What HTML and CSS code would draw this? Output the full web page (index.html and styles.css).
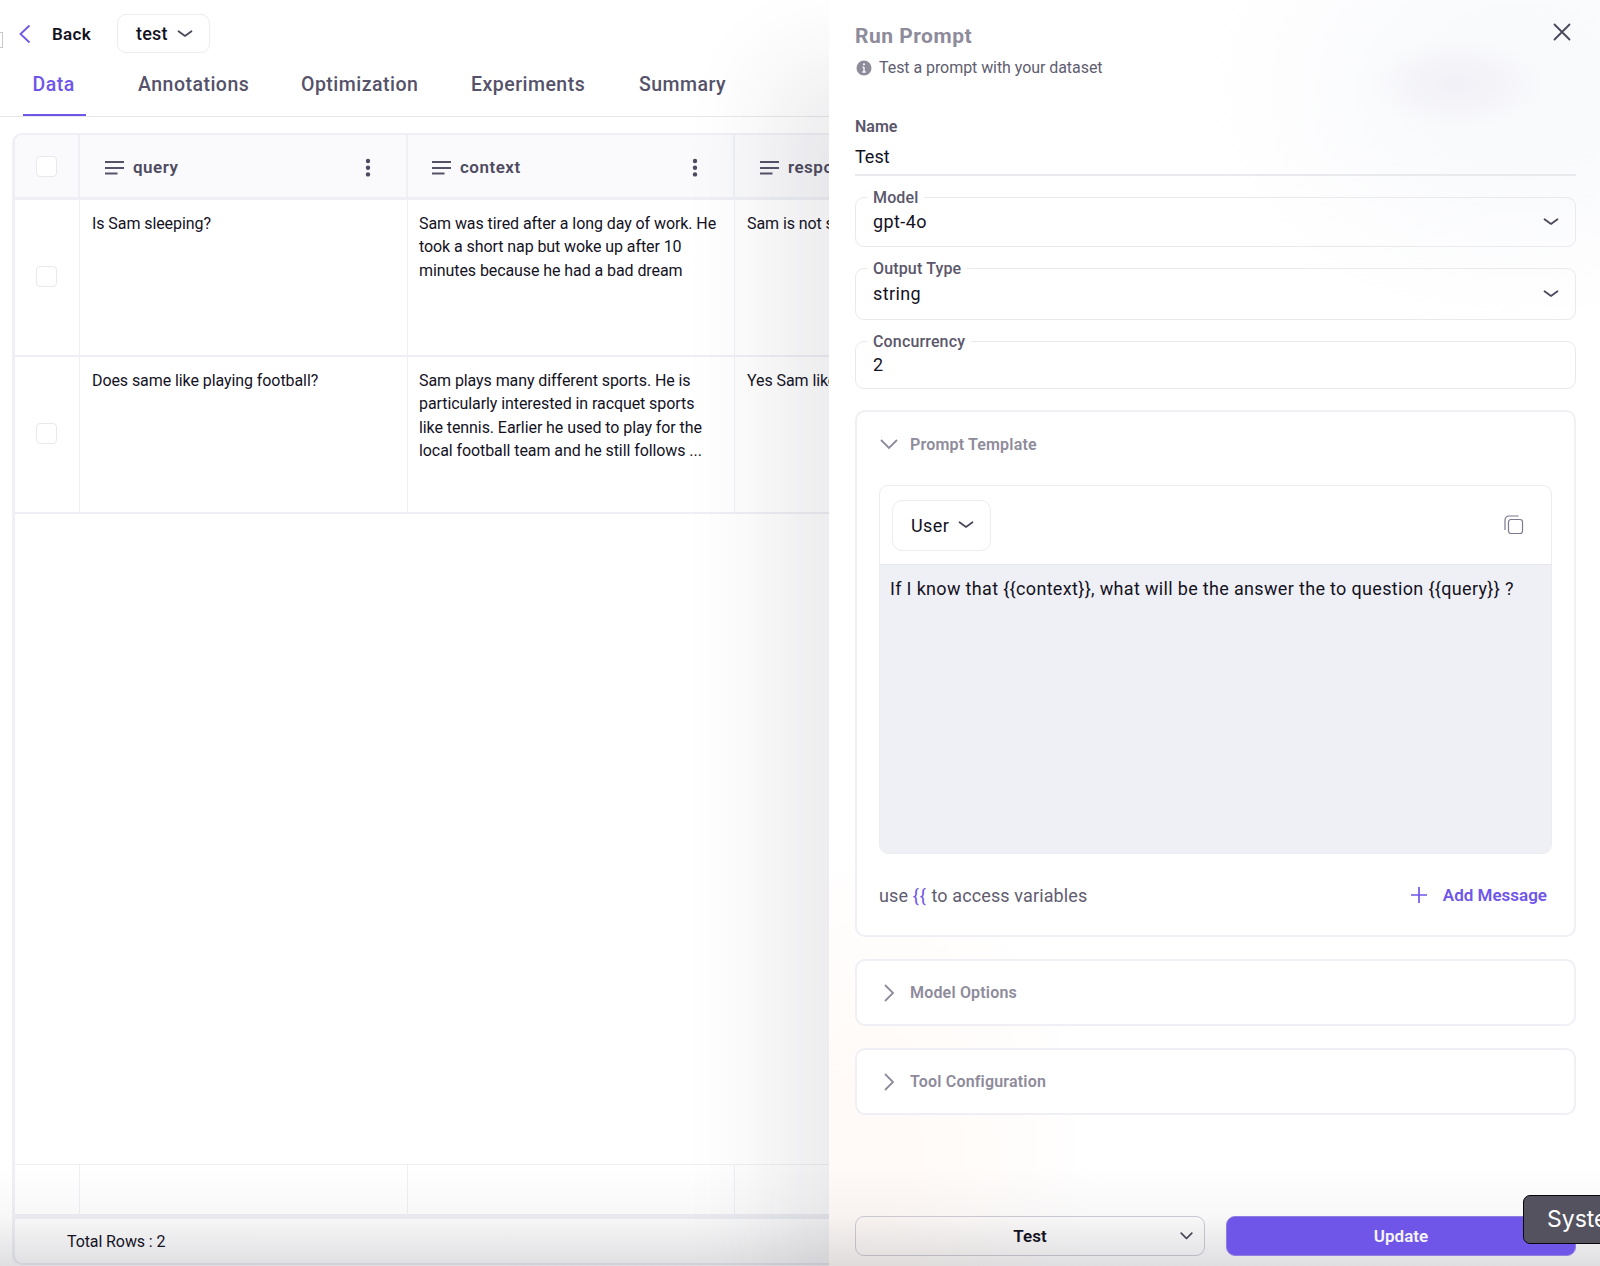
FILE: index.html
```
<!DOCTYPE html>
<html lang="en">
<head>
    <meta charset="UTF-8">
    <meta name="viewport" content="width=device-width, initial-scale=1.0">
    <title>Run Prompt</title>
    <link rel="stylesheet" href="styles.css">
</head>
<body>
    <div class="app">
        <!-- Dataset page -->
        <main class="page">
            <div class="sidebar-toggle"></div>
            <header class="topbar">
                <svg class="back-icon" width="12" height="20" viewBox="0 0 12 20"><path d="M10.5 1.5 1.5 10l9 8.500"/></svg>
                <span class="back">Back</span>
                <button class="dataset-select">
                    <span>test</span>
                    <svg class="chevron" width="16" height="8" viewBox="0 0 16 8"><path d="M1.500 1.200 8 6l6.500-4.800"/></svg>
                </button>
            </header>
            <nav class="tabs">
                <a class="tab tab-data active"><span>Data</span></a>
                <a class="tab tab-annotations">Annotations</a>
                <a class="tab tab-optimization">Optimization</a>
                <a class="tab tab-experiments">Experiments</a>
                <a class="tab tab-summary">Summary</a>
            </nav>

            <div class="grid">
                <div class="row head">
                    <div class="cell check"><span class="checkbox"></span></div>
                    <div class="cell">
                        <svg class="lines" width="22" height="16" viewBox="0 0 22 16"><path d="M1 2h19M1 8h19M1 13.500h12.500"/></svg>
                        <span class="col-name">query</span>
                        <svg class="dots" width="6" height="20" viewBox="0 0 6 20"><circle cx="3" cy="3" r="2.200"/><circle cx="3" cy="9.700" r="2.200"/><circle cx="3" cy="16.400" r="2.200"/></svg>
                    </div>
                    <div class="cell">
                        <svg class="lines" width="22" height="16" viewBox="0 0 22 16"><path d="M1 2h19M1 8h19M1 13.500h12.500"/></svg>
                        <span class="col-name">context</span>
                        <svg class="dots" width="6" height="20" viewBox="0 0 6 20"><circle cx="3" cy="3" r="2.200"/><circle cx="3" cy="9.700" r="2.200"/><circle cx="3" cy="16.400" r="2.200"/></svg>
                    </div>
                    <div class="cell">
                        <svg class="lines" width="22" height="16" viewBox="0 0 22 16"><path d="M1 2h19M1 8h19M1 13.500h12.500"/></svg>
                        <span class="col-name">response</span>
                    </div>
                </div>
                <div class="row">
                    <div class="cell check"><span class="checkbox"></span></div>
                    <div class="cell">Is Sam sleeping?</div>
                    <div class="cell">Sam was tired after a long day of work. He<br>took a short nap but woke up after 10<br>minutes because he had a bad dream</div>
                    <div class="cell">Sam is not sleeping</div>
                </div>
                <div class="row">
                    <div class="cell check"><span class="checkbox"></span></div>
                    <div class="cell">Does same like playing football?</div>
                    <div class="cell">Sam plays many different sports. He is<br>particularly interested in racquet sports<br>like tennis. Earlier he used to play for the<br>local football team and he still follows ...</div>
                    <div class="cell">Yes Sam likes football</div>
                </div>
                <div class="empty"></div>
                <div class="row pinned">
                    <div class="cell"></div>
                    <div class="cell"></div>
                    <div class="cell"></div>
                    <div class="cell"></div>
                </div>
                <div class="total">Total Rows : 2</div>
            </div>
        </main>

        <!-- Run prompt drawer -->
        <aside class="drawer">
            <div class="drawer-head">
                <h2>Run Prompt</h2>
                <svg class="close" width="18" height="18" viewBox="0 0 18 18"><path d="M1.500 1.500l15 15M16.500 1.500l-15 15"/></svg>
            </div>
            <div class="hint">
                <svg width="16" height="16" viewBox="0 0 16 16"><circle cx="8" cy="8" r="7.500" fill="#8e8b9b"/><path d="M8 7v5M6.600 7.200H8M6.400 12h3.200" stroke="#fff" stroke-width="1.300"/><circle cx="8" cy="4.300" r="1" fill="#fff"/></svg>
                <span>Test a prompt with your dataset</span>
            </div>

            <label class="name-label">Name</label>
            <div class="name-input">Test</div>

            <fieldset class="field model">
                <legend>Model</legend>
                <span class="value">gpt-4o</span>
                <svg class="chevron" width="16" height="8" viewBox="0 0 16 8"><path d="M1.500 1.200 8 6l6.500-4.800"/></svg>
            </fieldset>
            <fieldset class="field output">
                <legend>Output Type</legend>
                <span class="value">string</span>
                <svg class="chevron" width="16" height="8" viewBox="0 0 16 8"><path d="M1.500 1.200 8 6l6.500-4.800"/></svg>
            </fieldset>
            <fieldset class="field concurrency">
                <legend>Concurrency</legend>
                <span class="value">2</span>
            </fieldset>

            <section class="card template">
                <div class="card-head">
                    <svg class="arrow" width="18" height="18" viewBox="0 0 18 18"><path d="M1 5l8 8 8-8"/></svg>
                    <span class="card-title">Prompt Template</span>
                </div>
                <div class="message">
                    <div class="message-head">
                        <button class="role">
                            <span>User</span>
                            <svg class="chevron" width="16" height="8" viewBox="0 0 16 8"><path d="M1.500 1.200 8 6l6.500-4.800"/></svg>
                        </button>
                        <svg class="copy" width="20" height="20" viewBox="0 0 20 20"><rect x="4.500" y="4.500" width="14" height="14" rx="2.500"/><path d="M1 15V5a4 4 0 0 1 4-4h9.500"/></svg>
                    </div>
                    <div class="message-body">If I know that {{context}}, what will be the answer the to question {{query}} ?</div>
                </div>
                <div class="card-foot">
                    <span class="variables">use <b>{{</b> to access variables</span>
                    <span class="add">
                        <svg width="16" height="16" viewBox="0 0 16 16"><path d="M8 0v16M0 8h16"/></svg>
                        Add Message
                    </span>
                </div>
            </section>

            <section class="card closed">
                <svg class="arrow" width="18" height="18" viewBox="0 0 18 18"><path d="M5 1l8 8-8 8"/></svg>
                <span class="card-title">Model Options</span>
            </section>
            <section class="card closed">
                <svg class="arrow" width="18" height="18" viewBox="0 0 18 18"><path d="M5 1l8 8-8 8"/></svg>
                <span class="card-title">Tool Configuration</span>
            </section>

            <div class="actions">
                <button class="btn test-btn">
                    <span>Test</span>
                    <svg class="chevron" width="13" height="8" viewBox="0 0 13 8"><path d="M1.200 1.200 6.500 6.500l5.300-5.300"/></svg>
                </button>
                <button class="btn update-btn">Update</button>
            </div>
        </aside>

        <div class="bottom-shade"></div>
        <div class="tooltip">System Settings</div>
    </div>
</body>
</html>
```
FILE: styles.css
```
* {
    box-sizing: border-box;
}

body {
    margin: 0;
    background: #fff;
    color: #14121f;
    font-family: Roboto, "Open Sans", sans-serif;
    font-size: 16px;
}

button {
    font: inherit;
    color: inherit;
    background: none;
    padding: 0;
}

svg {
    display: block;
    flex: none;
    fill: none;
}

.app {
    position: relative;
    display: flex;
    width: 1600px;
    height: 1266px;
    overflow: hidden;
}

.chevron path {
    stroke: #4a475a;
    stroke-width: 1.7;
    stroke-linecap: round;
    stroke-linejoin: round;
}

/* page */
.page {
    position: relative;
    display: flex;
    flex-direction: column;
    width: 829px;
    overflow: hidden;
}

.sidebar-toggle {
    position: absolute;
    left: -10px;
    top: 32px;
    width: 13px;
    height: 16px;
    border: 1px solid #c9c8d0;
}

.topbar {
    display: flex;
    align-items: center;
    height: 67px;
    padding-left: 19px;
}

.back-icon path {
    stroke: #6f55e8;
    stroke-width: 1.8;
}

.back {
    margin-left: 21px;
    width: 65px;
    font-size: 17px;
    font-weight: 600;
    letter-spacing: .3px;
}

.dataset-select {
    display: flex;
    align-items: center;
    justify-content: space-between;
    width: 93px;
    height: 39px;
    padding: 0 16px 0 18px;
    border: 1px solid #ececf1;
    border-radius: 9px;
    font-size: 18px;
    font-weight: 500;
    letter-spacing: .2px;
}

.tabs {
    display: flex;
    height: 50px;
    padding-left: 23px;
    border-bottom: 1px solid #e8e8ec;
    color: #55526a;
    font-size: 19.5px;
    font-weight: 500;
    letter-spacing: .48px;
    line-height: 36px;
}

.tab {
    height: 49px;
    white-space: nowrap;
}

.tab-data {
    width: 63px;
    margin-right: 52px;
    padding-left: 9.500px;
}

.tab.active {
    color: #6f55e8;
    border-bottom: 2px solid #6f55e8;
}

.tab-annotations { width: 163px; }
.tab-optimization { width: 170px; }
.tab-experiments { width: 168px; }

.grid {
    display: flex;
    flex-direction: column;
    width: 1080px;
    height: 1132px;
    margin: 16px 0 0 12px;
    border: 2px solid #efeff5;
    border-left-width: 3px;
    border-radius: 10px;
    overflow: hidden;
}

.row {
    display: grid;
    grid-template-columns: 65px 328px 327px 360px;
    flex: none;
    height: 157px;
    border-bottom: 2px solid #efeff5;
}

.cell {
    padding: 11.500px 0 0 12px;
    border-right: 1px solid #f0f0f4;
    font-size: 16px;
    letter-spacing: -.08px;
    line-height: 23.600px;
    white-space: nowrap;
}

.cell:nth-child(3) {
    padding-left: 11px;
}

.cell.check {
    display: flex;
    align-items: center;
    padding: 0 0 2px 21px;
}

.checkbox {
    width: 21px;
    height: 21px;
    border: 1px solid #e9e9ed;
    border-radius: 4px;
    background: #fff;
}

.row.head {
    height: 65px;
    background: #fafafc;
    border-bottom-width: 3px;
}

.head .cell {
    display: flex;
    align-items: center;
    padding: 3px 35px 0 24px;
    border-right: 2px solid #efeff5;
}

.head .cell:nth-child(3) {
    padding-left: 23px;
}

.head .cell.check {
    padding: 0 0 0 21px;
}

.lines path {
    stroke: #55526a;
    stroke-width: 1.8;
}

.col-name {
    margin-left: 7px;
    color: #4e4b60;
    font-size: 17px;
    font-weight: 600;
    letter-spacing: .5px;
}

.dots {
    margin-left: auto;
    fill: #4e4b60;
}

.empty {
    flex: 1;
}

.row.pinned {
    height: 55px;
    border-top: 1px solid #f0f0f4;
    border-bottom: 5px solid #efeff5;
}

.total {
    height: 44px;
    padding-left: 52px;
    font-size: 16px;
    letter-spacing: -.1px;
    line-height: 46px;
}

/* drawer */
.drawer {
    position: relative;
    display: flex;
    flex-direction: column;
    width: 771px;
    padding: 0 24px 0 26px;
    background:
        radial-gradient(ellipse 90px 45px at 628px 84px, rgba(232, 230, 240, .5), transparent),
        radial-gradient(ellipse 320px 240px at 690px 90px, #f9fafc 30%, transparent),
        radial-gradient(ellipse 240px 320px at 30px 1160px, #fffaf7 20%, transparent),
        #fff;
}

.page::after {
    content: "";
    position: absolute;
    left: 829px;
    top: 0;
    width: 771px;
    height: 1266px;
    box-shadow: -62px 58px 90px -8px rgba(40, 38, 62, .095);
}

.drawer-head {
    display: flex;
    justify-content: space-between;
    height: 53px;
    padding: 23px 5px 0 0;
}

h2 {
    margin: 0;
    color: #8e8b9b;
    font-size: 21px;
    font-weight: 700;
    line-height: 26px;
    letter-spacing: .5px;
}

.close path {
    stroke: #4a475a;
    stroke-width: 1.8;
    stroke-linecap: round;
}

.hint {
    display: flex;
    align-items: center;
    gap: 7px;
    height: 29px;
    padding-left: 1px;
    color: #605d70;
    font-size: 16px;
    letter-spacing: -.06px;
}

.name-label {
    margin-top: 35px;
    color: #5a576b;
    font-size: 16px;
    font-weight: 600;
    line-height: 20px;
}

.name-input {
    height: 39px;
    border-bottom: 2px solid #e9e9ee;
    font-size: 18px;
    line-height: 39px;
}

.field {
    display: flex;
    justify-content: space-between;
    min-width: 0;
    margin: 0;
    padding: 0 16px 0 17px;
    border: 1px solid #e9e9ee;
    border-radius: 9px;
}

.field legend {
    height: 18px;
    margin-left: -6px;
    padding: 0 6px;
    color: #5a576b;
    font-size: 16px;
    font-weight: 500;
    letter-spacing: .15px;
    line-height: 19px;
}

.field .value {
    height: 24px;
    margin-top: 4px;
    font-size: 18px;
    letter-spacing: .4px;
    line-height: 24px;
}

.field .chevron {
    margin-top: 12px;
}

.model { height: 59px; margin-top: 12px; }
.output { height: 61px; margin-top: 12px; }
.output .value { margin-top: 5px; }
.output .chevron { margin-top: 13px; }
.concurrency { height: 57px; margin-top: 12px; }
.concurrency .value { margin-top: 3px; }

.card {
    border: 2px solid #efeff5;
    border-radius: 10px;
    background: #fff;
}

.arrow path {
    stroke: #8e8b9b;
    stroke-width: 1.8;
}

.card-title {
    margin-left: 12px;
    color: #8e8b9b;
    font-size: 16px;
    font-weight: 600;
    letter-spacing: .18px;
}

.template {
    height: 527px;
    margin-top: 21px;
    padding: 0 22px;
}

.card-head {
    display: flex;
    align-items: center;
    height: 64px;
    margin-bottom: 9px;
    padding-left: 1px;
}

.message {
    height: 369px;
    border: 1px solid #ececf1;
    border-radius: 9px;
    overflow: hidden;
}

.message-head {
    display: flex;
    align-items: center;
    justify-content: space-between;
    height: 79px;
    padding: 0 27px 0 12px;
    border-bottom: 1px solid #e6e6eb;
}

.role {
    display: flex;
    align-items: center;
    justify-content: space-between;
    width: 99px;
    height: 51px;
    padding: 0 16px 0 18px;
    border: 1px solid #ececf1;
    border-radius: 10px;
    font-size: 18px;
    letter-spacing: .4px;
}

.copy {
    stroke: #7d7a8d;
    stroke-width: 1.2;
}

.message-body {
    height: 290px;
    padding: 11px 10px;
    background: #eff0f5;
    font-size: 18px;
    letter-spacing: .33px;
    line-height: 26px;
    white-space: nowrap;
}

.card-foot {
    display: flex;
    align-items: center;
    justify-content: space-between;
    height: 82px;
    padding-right: 5px;
}

.variables {
    color: #5f5c70;
    font-size: 18px;
    letter-spacing: .12px;
}

.variables b {
    color: #6f55e8;
    font-weight: 400;
    letter-spacing: 1px;
}

.add {
    display: flex;
    align-items: center;
    gap: 16px;
    color: #6f55e8;
    font-size: 17px;
    font-weight: 600;
}

.add path {
    stroke: #6f55e8;
    stroke-width: 1.7;
}

.closed {
    display: flex;
    align-items: center;
    height: 67px;
    margin-top: 22px;
    padding-left: 23px;
}

.actions {
    display: flex;
    gap: 21px;
    margin-top: 101px;
}

.btn {
    display: flex;
    align-items: center;
    justify-content: center;
    flex: 1;
    height: 40px;
    border: 1px solid #cfced6;
    border-radius: 9px;
    font-size: 17px;
    font-weight: 600;
}

.test-btn span {
    flex: 1;
    padding-left: 24px;
}

.test-btn .chevron {
    margin-right: 11px;
}

.update-btn {
    position: relative;
    z-index: 2;
    border-color: #8d7fe0;
    background: #6f55e8;
    color: #f6f5fc;
}

/* overlays */
.bottom-shade {
    position: absolute;
    left: 0;
    right: 0;
    bottom: 0;
    z-index: 1;
    height: 100px;
    background: linear-gradient(rgba(30, 28, 44, 0), rgba(30, 28, 44, .03) 50%, rgba(30, 28, 44, .14));
    pointer-events: none;
}

.tooltip {
    position: absolute;
    left: 1523px;
    top: 1195px;
    z-index: 3;
    width: 190px;
    height: 49px;
    padding-left: 23px;
    border: 1.500px solid #08070d;
    border-radius: 7px;
    background: #54525f;
    color: #fff;
    font-family: Inter, sans-serif;
    font-size: 23px;
    line-height: 46px;
    white-space: nowrap;
}
```
